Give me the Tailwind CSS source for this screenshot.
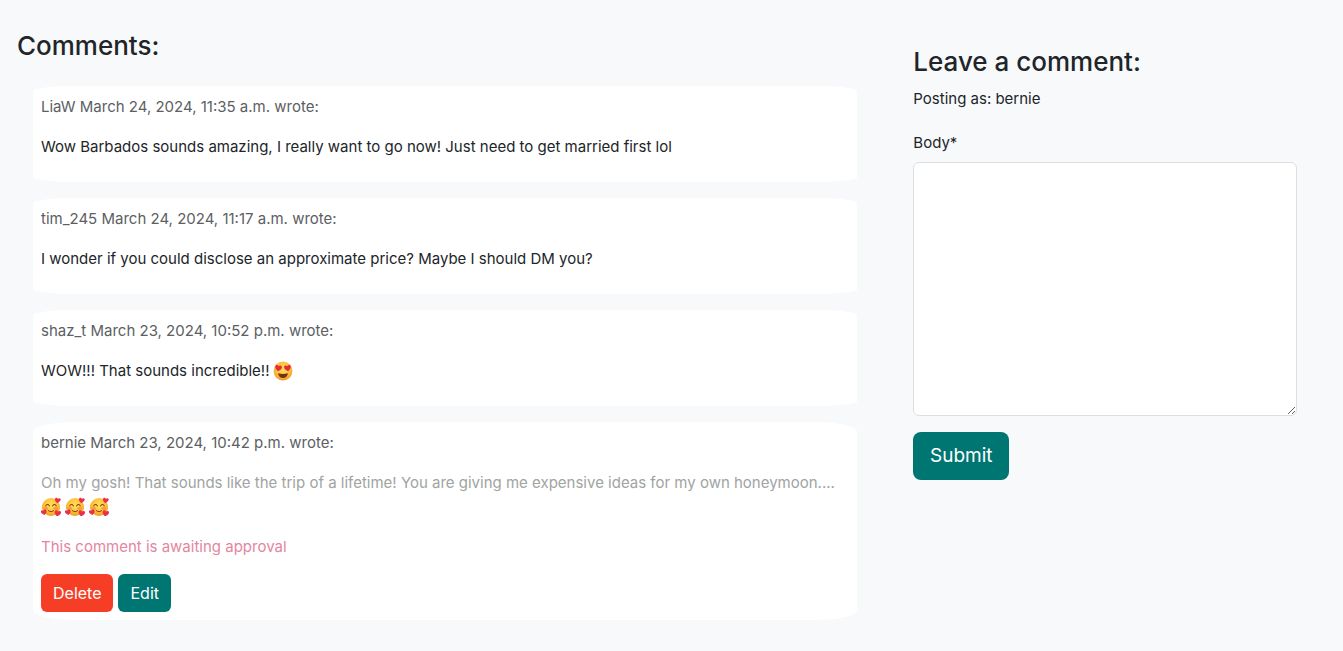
<!DOCTYPE html>
<html lang="en">
<head>
<meta charset="utf-8">
<meta name="viewport" content="width=device-width, initial-scale=1">
<title>Comments</title>
<script src="https://cdn.jsdelivr.net/npm/@tailwindcss/browser@4"></script>
</head>
<body class="min-h-screen bg-[#f8f9fb] font-['Inter','Liberation_Sans',sans-serif] text-[15px] leading-6 text-[#212529]">
<svg class="absolute size-0" aria-hidden="true">
  <defs>
    <radialGradient id="face" cx="50%" cy="40%" r="60%">
      <stop offset="0" stop-color="#ffe15c"/><stop offset=".6" stop-color="#fdc43c"/><stop offset="1" stop-color="#ee9a24"/>
    </radialGradient>
    <path id="heart" d="M0 3.2C-1.6 1.9-3.4.6-3.4-1.2-3.4-3.3-.9-3.7 0-1.9.9-3.7 3.4-3.3 3.4-1.2 3.4.6 1.6 1.9 0 3.2Z"/>
    <symbol id="heart-eyes" viewBox="0 0 20 20">
      <circle cx="10" cy="10" r="9.4" fill="url(#face)"/>
      <use href="#heart" transform="translate(5.4 7.2) rotate(8)" fill="#e8283c"/>
      <use href="#heart" transform="translate(14.6 7.2) rotate(-8)" fill="#e8283c"/>
      <path d="M5 12.2Q10 13.6 15 12.2Q14.2 17 10 17Q5.8 17 5 12.2Z" fill="#743018"/>
    </symbol>
    <symbol id="smiling-hearts" viewBox="0 0 20 20">
      <circle cx="10" cy="10" r="9" fill="url(#face)"/>
      <ellipse cx="4.8" cy="11.4" rx="2.4" ry="1.7" fill="#f58a3c" opacity=".7"/>
      <ellipse cx="14.8" cy="11.4" rx="2.4" ry="1.7" fill="#f58a3c" opacity=".7"/>
      <path d="M4.8 8.8Q6.5 6.3 8.4 8.8M11.6 8.8Q13.5 6.3 15.2 8.8M7.5 13.6Q10 15.6 12.5 13.6" fill="none" stroke="#8a4518" stroke-width="1.1" stroke-linecap="round"/>
      <use href="#heart" transform="translate(16.6 3.5) rotate(12) scale(.85)" fill="#e8304a"/>
      <use href="#heart" transform="translate(3 15.4) rotate(-15) scale(.85)" fill="#e8304a"/>
      <use href="#heart" transform="translate(16.6 16.4) rotate(12) scale(.95)" fill="#e8304a"/>
    </symbol>
  </defs>
</svg>
<main class="grid grid-cols-1 md:grid-cols-[2fr_1fr]">
  <section class="pt-[29px] pr-[38px] pb-8 pl-[17px]">
    <h2 class="text-[26px] leading-[34px] font-medium">Comments:</h2>
    <div class="mt-[23px] ml-4 flex flex-col gap-4">
      <article class="rounded-[5%] bg-white px-2 pt-[9px] pb-[23px]">
        <p class="text-[#5c6063]">LiaW March 24, 2024, 11:35 a.m. wrote:</p>
        <p class="mt-4">Wow Barbados sounds amazing, I really want to go now! Just need to get married first lol</p>
      </article>
      <article class="rounded-[5%] bg-white px-2 pt-[9px] pb-[23px]">
        <p class="text-[#5c6063]">tim_245 March 24, 2024, 11:17 a.m. wrote:</p>
        <p class="mt-4">I wonder if you could disclose an approximate price? Maybe I should DM you?</p>
      </article>
      <article class="rounded-[5%] bg-white px-2 pt-[9px] pb-[23px]">
        <p class="text-[#5c6063]">shaz_t March 23, 2024, 10:52 p.m. wrote:</p>
        <p class="mt-4 flex items-center gap-1">WOW!!! That sounds incredible!!
          <svg class="size-5" role="img" aria-label="Heart eyes"><use href="#heart-eyes"/></svg></p>
      </article>
      <article class="rounded-[5%] bg-white px-2 pt-[9px] pb-2">
        <p class="text-[#5c6063]">bernie March 23, 2024, 10:42 p.m. wrote:</p>
        <p class="mt-4 text-[#a0a4a2]">Oh my gosh! That sounds like the trip of a lifetime! You are giving me expensive ideas for my own honeymoon....</p>
        <p class="flex h-6 items-center gap-1">
          <svg class="size-5" role="img" aria-label="Smiling with hearts"><use href="#smiling-hearts"/></svg>
          <svg class="size-5" role="img" aria-label="Smiling with hearts"><use href="#smiling-hearts"/></svg>
          <svg class="size-5" role="img" aria-label="Smiling with hearts"><use href="#smiling-hearts"/></svg>
        </p>
        <p class="mt-4 text-[#e3869f]">This comment is awaiting approval</p>
        <div class="mt-[15px] flex gap-[5px]">
          <button type="button" class="h-[38px] rounded-md bg-[#f63e26] px-3 text-base text-white">Delete</button>
          <button type="button" class="h-[38px] rounded-md bg-[#007673] px-3 text-base text-white">Edit</button>
        </div>
      </article>
    </div>
  </section>
  <section class="pt-[45px] pr-[46px] pb-8 pl-[18px]">
    <h2 class="text-[26px] leading-[34px] font-medium">Leave a comment:</h2>
    <p class="mt-2">Posting as: bernie</p>
    <form class="mt-5">
      <label for="body" class="block">Body*</label>
      <textarea id="body" name="body" required class="mt-[7px] block h-[254px] w-full resize-y rounded-md border border-[#dbdfe4] bg-white px-3 py-1.5"></textarea>
      <button type="submit" class="mt-4 h-12 w-24 rounded-lg bg-[#007673] text-[19px] text-white">Submit</button>
    </form>
  </section>
</main>
</body>
</html>
